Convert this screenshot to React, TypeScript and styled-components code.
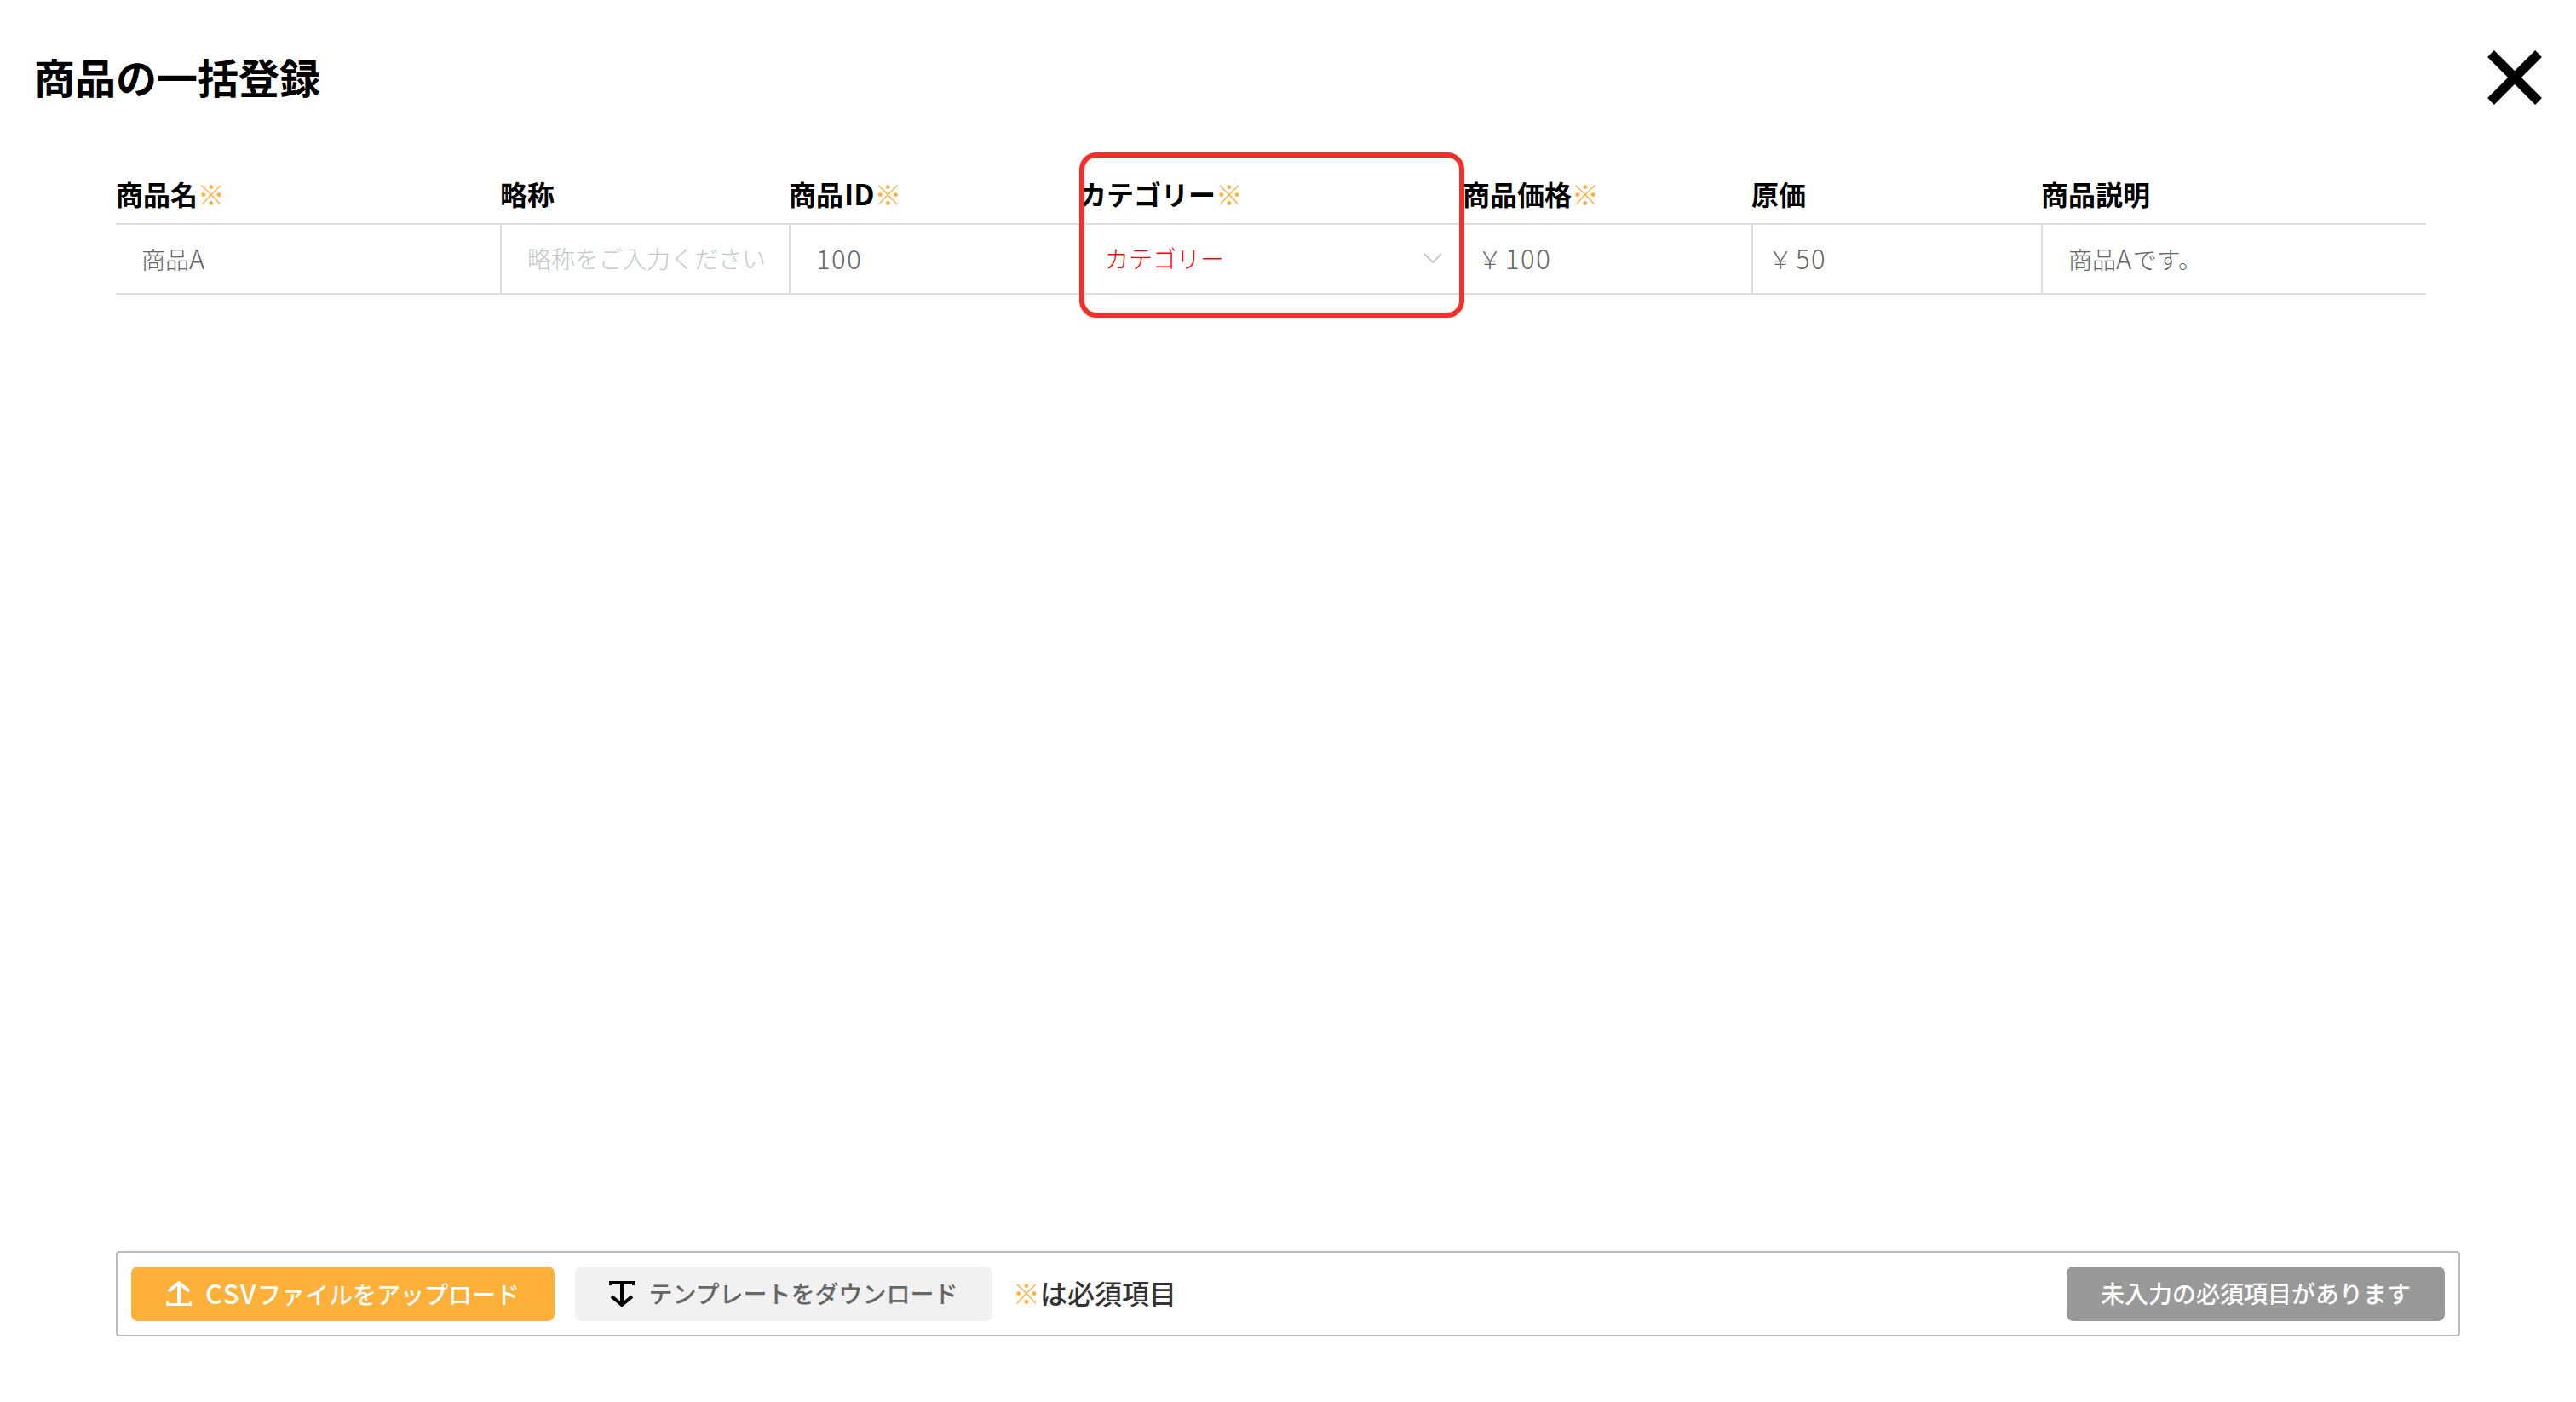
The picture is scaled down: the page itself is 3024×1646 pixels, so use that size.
import React from "react";
import styled, { createGlobalStyle } from "styled-components";

const font = `"Noto Sans CJK JP", "Noto Sans", "Liberation Sans", sans-serif`;

const Global = createGlobalStyle`
  html, body { margin: 0; padding: 0; background: #fff; }
  * { box-sizing: border-box; }
  body { font-family: ${font}; }
`;

const Page = styled.div`
  width: 3024px;
  height: 1646px;
  display: flex;
  flex-direction: column;
  background: #fff;
  overflow: hidden;
`;

const TitleBar = styled.header`
  display: flex;
  align-items: center;
  justify-content: space-between;
  height: 64px;
  margin-top: 59px;
  padding: 0 40px 0 40px;
`;

const Title = styled.h1`
  margin: 0 0 3px;
  font-size: 48px;
  line-height: 61px;
  font-weight: 700;
  color: #000;
`;

const Close = styled.button`
  width: 64px;
  height: 64px;
  padding: 0;
  border: 0;
  background: none;
  display: block;
  svg { display: block; }
`;

const TableArea = styled.section`
  position: relative;
  margin: 73px 176px 0 136px;
`;

const Grid = styled.div`
  display: grid;
  grid-template-columns: 451px 339px 341px 450px 339px 340px 452px;
`;

const Head = styled.div`
  height: 68px;
  display: flex;
  align-items: center;
  font-size: 32px;
  line-height: 40px;
  font-weight: 700;
  color: #000;
  border-bottom: 2px solid #ddd;
  padding-bottom: 4px;
`;

const HeadLatin = styled.span`
  font-size: 34px;
  margin-left: 1px;
`;

const Mark = styled.span`
  color: #ffb03b;
  font-weight: 400;
`;

const Cell = styled.div<{ $first?: boolean }>`
  height: 82px;
  display: flex;
  align-items: center;
  font-size: 28px;
  font-weight: 300;
  color: #666;
  border-bottom: 2px solid #ddd;
  border-left: ${(p) => (p.$first ? "0" : "2px solid #ddd")};
  padding: 0 0 3px 30px;
  white-space: nowrap;
`;

const Num = styled.span`
  font-size: 31px;
  letter-spacing: 1.5px;
`;

const PriceNum = styled(Num)`
  margin-left: 4px;
`;

const Placeholder = styled.span`
  color: #c4c7cc;
`;

const PriceCell = styled(Cell)`
  padding-left: 18px;
`;

const SelectCell = styled(Cell)`
  color: #f00;
  justify-content: space-between;
  padding-left: 28px;
  padding-right: 24px;
`;

const Highlight = styled.div`
  position: absolute;
  left: 1131px;
  top: -17px;
  width: 452px;
  height: 194px;
  border: 6px solid #f42e28;
  border-radius: 20px;
  pointer-events: none;
`;

const Footer = styled.footer`
  margin: auto 136px 77px 136px;
  height: 100px;
  display: flex;
  align-items: center;
  border: 2px solid #bbb;
  border-radius: 4px;
  padding: 0 16px;
`;

const Button = styled.button<{ $bg: string; $fg: string; $w: number }>`
  width: ${(p) => p.$w}px;
  height: 64px;
  border: 0;
  border-radius: 8px;
  padding: 0;
  display: flex;
  align-items: center;
  justify-content: center;
  gap: 16px;
  background: ${(p) => p.$bg};
  color: ${(p) => p.$fg};
  font-family: ${font};
  font-size: 28px;
  font-weight: 500;
  white-space: nowrap;
  svg { flex: none; display: block; }
`;

const ButtonLabel = styled.span`
  padding-bottom: 3px;
`;

const ButtonLatin = styled.span`
  font-size: 31px;
  letter-spacing: 1.5px;
`;

const Upload = styled(Button)`
  margin-right: 24px;
`;

const Required = styled.div`
  margin-left: 24px;
  padding-bottom: 4px;
  font-size: 32px;
  font-weight: 500;
  color: #333;
  white-space: nowrap;
`;

const Spacer = styled.div`
  flex: 1;
`;

const heads: { label: string; latin?: string; req: boolean }[] = [
  { label: "商品名", req: true },
  { label: "略称", req: false },
  { label: "商品", latin: "ID", req: true },
  { label: "カテゴリー", req: true },
  { label: "商品価格", req: true },
  { label: "原価", req: false },
  { label: "商品説明", req: false },
];

export default function App() {
  return (
    <Page>
      <Global />
      <TitleBar>
        <Title>商品の一括登録</Title>
        <Close aria-label="閉じる">
          <svg width="64" height="64" viewBox="0 0 64 64">
            <path d="M4 4 L60 60 M60 4 L4 60" stroke="#000" strokeWidth="11" fill="none" />
          </svg>
        </Close>
      </TitleBar>
      <TableArea>
        <Grid>
          {heads.map((h) => (
            <Head key={h.label}>
              {h.label}
              {h.latin && <HeadLatin>{h.latin}</HeadLatin>}
              {h.req && <Mark>※</Mark>}
            </Head>
          ))}
          <Cell $first>
            <span>
              商品<Num>A</Num>
            </span>
          </Cell>
          <Cell>
            <Placeholder>略称をご入力ください</Placeholder>
          </Cell>
          <Cell>
            <Num>100</Num>
          </Cell>
          <SelectCell>
            カテゴリー
            <svg width="22" height="12" viewBox="0 0 22 12">
              <path d="M1 1 L11 11 L21 1" stroke="#c4c7cc" strokeWidth="2" fill="none" />
            </svg>
          </SelectCell>
          <PriceCell $first>
            <span>
              ￥<PriceNum>100</PriceNum>
            </span>
          </PriceCell>
          <PriceCell>
            <span>
              ￥<PriceNum>50</PriceNum>
            </span>
          </PriceCell>
          <Cell>
            <span>
              商品<Num>A</Num>です。
            </span>
          </Cell>
        </Grid>
        <Highlight />
      </TableArea>
      <Footer>
        <Upload $bg="#ffb03b" $fg="#fff" $w={497}>
          <svg width="30" height="30" viewBox="0 0 30 30">
            <path d="M15 27 V3 M3 12 L15 2 L27 12" stroke="#fff" strokeWidth="4" fill="none" />
            <path d="M1.5 24 V27.5 H28.5 V24" stroke="#fff" strokeWidth="3" fill="none" />
          </svg>
          <ButtonLabel>
            <ButtonLatin>CSV</ButtonLatin>ファイルをアップロード
          </ButtonLabel>
        </Upload>
        <Button $bg="#f1f1f1" $fg="#666" $w={490}>
          <svg width="30" height="30" viewBox="0 0 30 30">
            <path d="M1.5 5 V1.5 H28.5 V5" stroke="#000" strokeWidth="3" fill="none" />
            <path d="M15 2 V27 M3 18 L15 28 L27 18" stroke="#000" strokeWidth="4" fill="none" />
          </svg>
          <ButtonLabel>テンプレートをダウンロード</ButtonLabel>
        </Button>
        <Required>
          <Mark>※</Mark>は必須項目
        </Required>
        <Spacer />
        <Button $bg="#999" $fg="#fff" $w={444}>
          <ButtonLabel>未入力の必須項目があります</ButtonLabel>
        </Button>
      </Footer>
    </Page>
  );
}
